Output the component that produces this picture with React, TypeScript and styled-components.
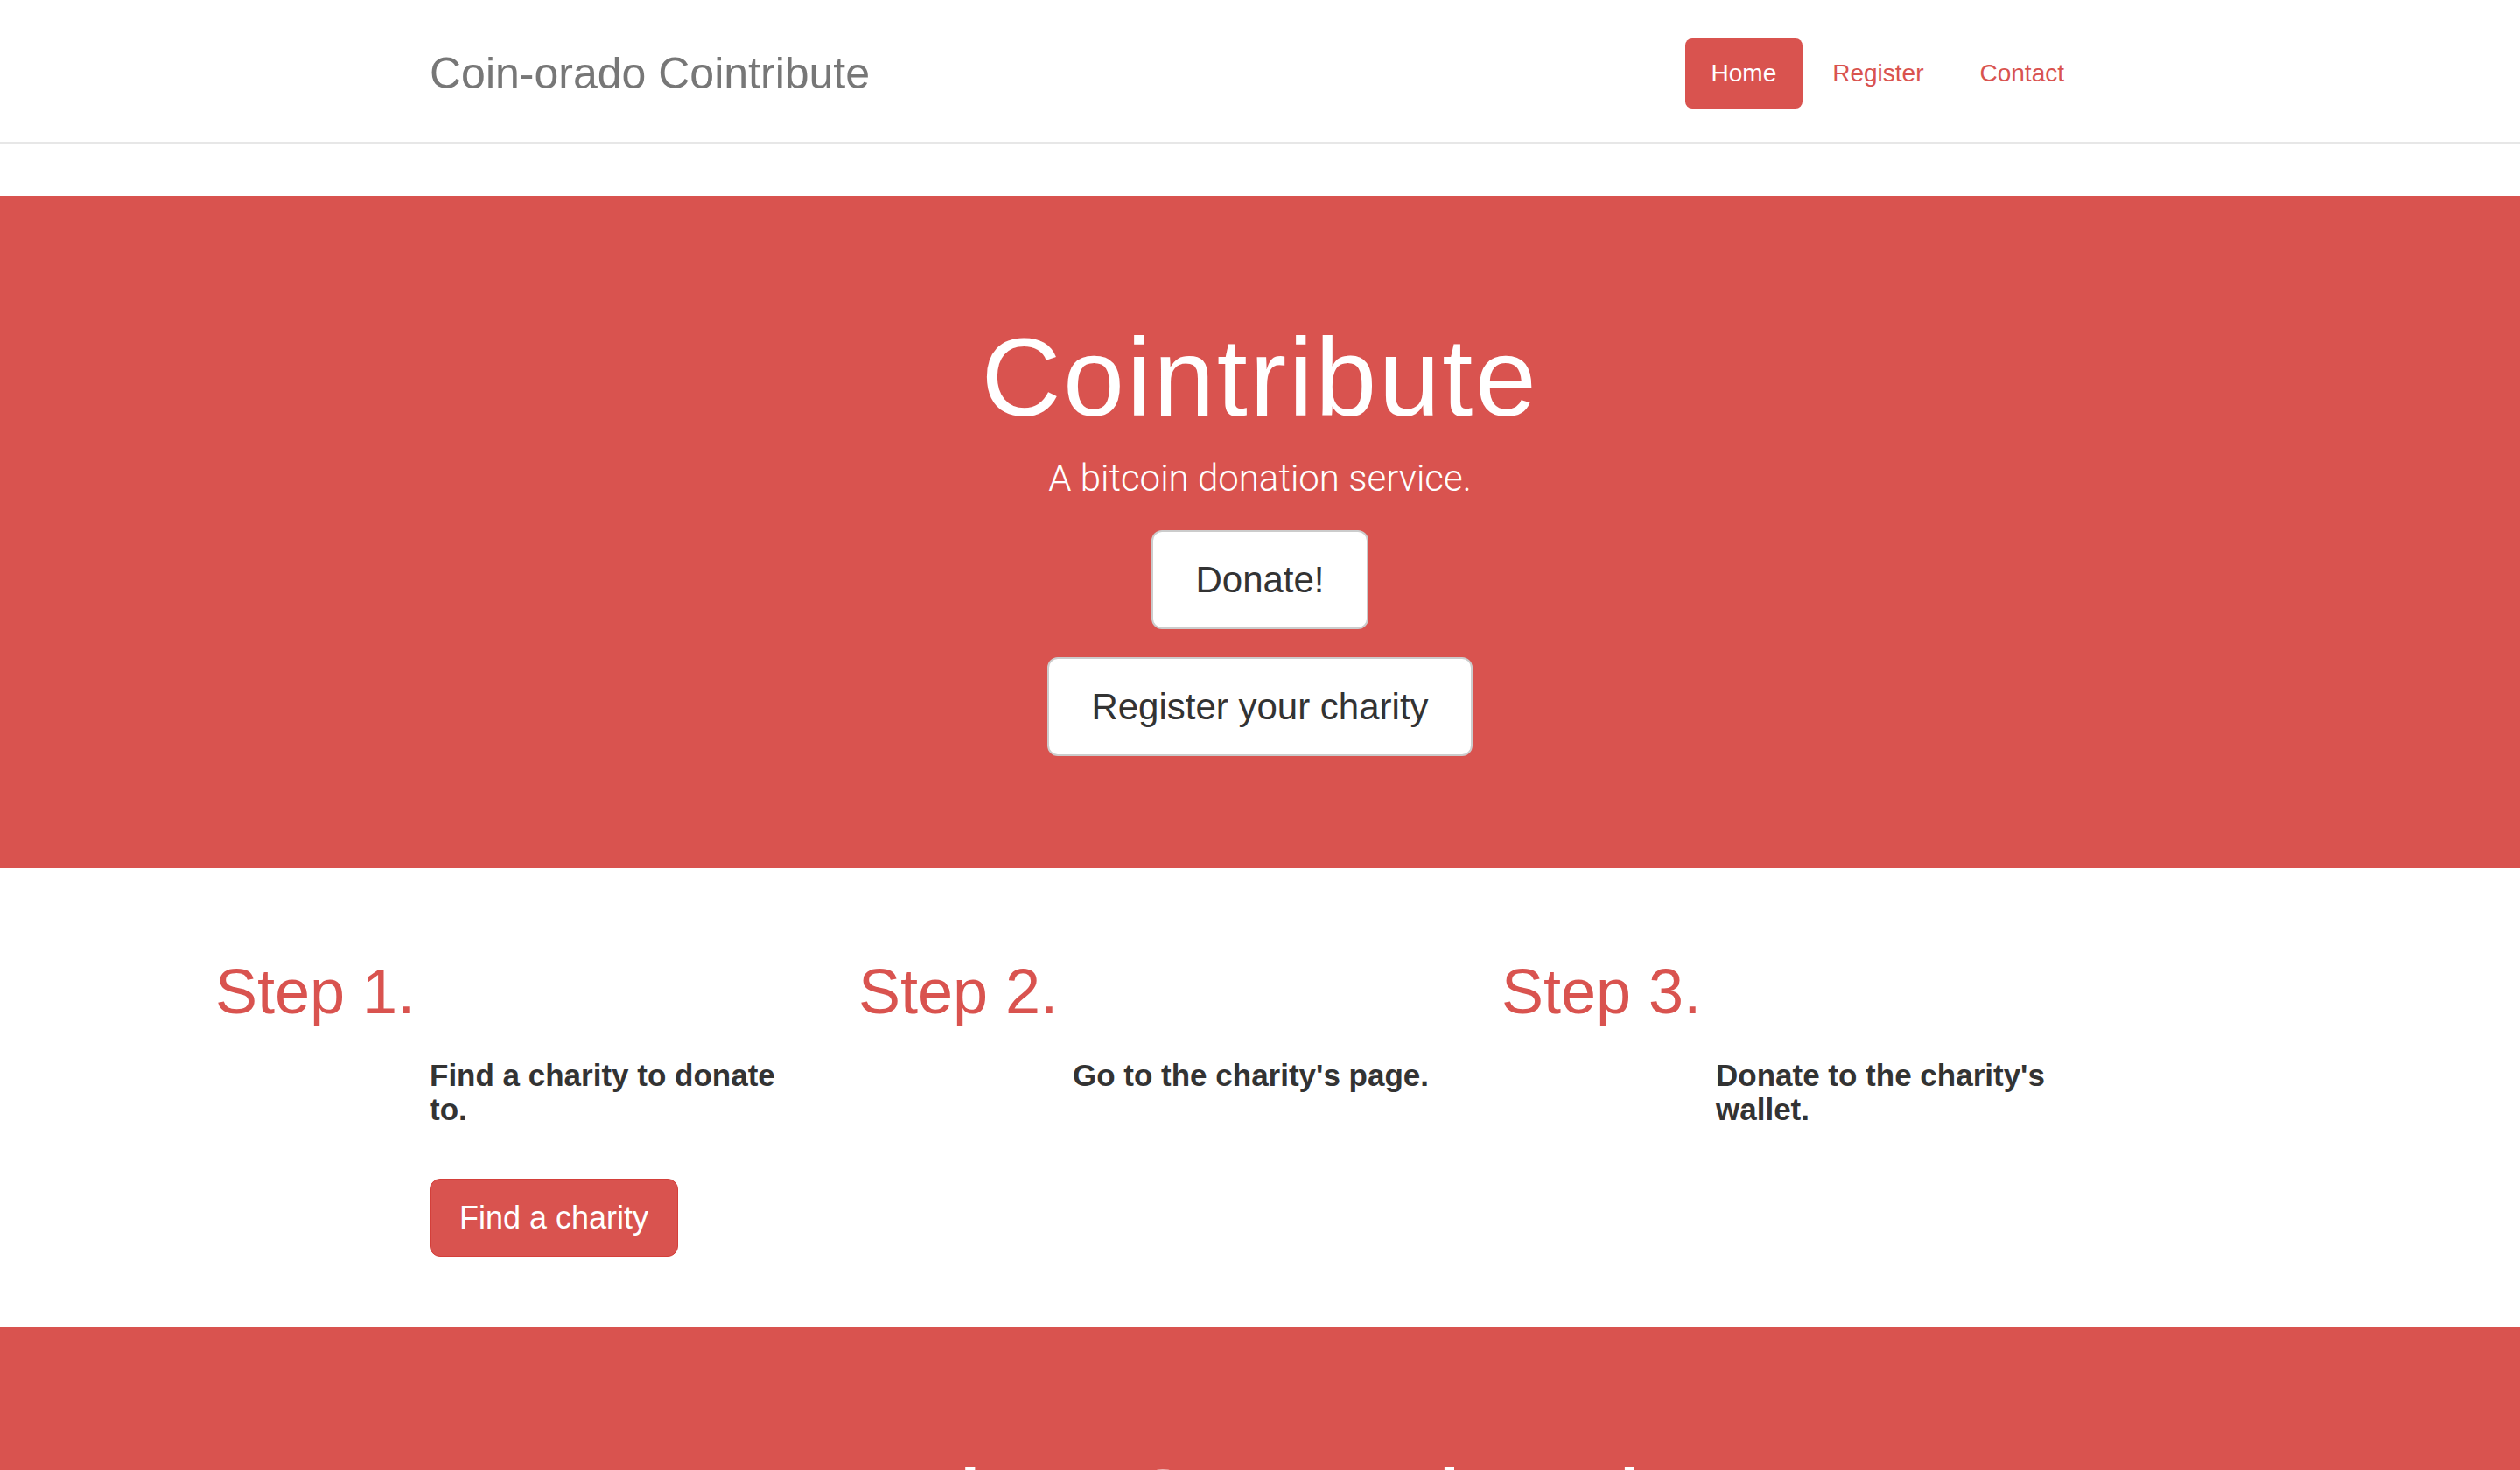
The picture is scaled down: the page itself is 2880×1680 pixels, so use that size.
import React from 'react'
import styled, { createGlobalStyle } from 'styled-components'

const red = '#d9534f'

const GlobalStyle = createGlobalStyle`
  html, body {
    margin: 0;
    padding: 0;
    background: #fff;
  }
  body {
    font-family: "Liberation Sans", Arial, sans-serif;
    font-size: 28px;
    line-height: 1.42857;
    color: #333;
  }
  * {
    box-sizing: border-box;
  }
`

const Navbar = styled.nav`
  background: #fff;
  border-bottom: 2px solid #e7e7e7;
  padding: 44px 0 38px;
  margin-bottom: 60px;
`

const NavInner = styled.div`
  width: 1898px;
  margin: 0 auto;
  display: flex;
  align-items: center;
  justify-content: space-between;
`

const Brand = styled.a`
  font-size: 50px;
  line-height: 80px;
  color: #777;
  text-decoration: none;
`

const Pills = styled.ul`
  display: flex;
  gap: 4px;
  list-style: none;
  margin: 0;
  padding: 0;
`

const Pill = styled.a<{ $active?: boolean }>`
  display: block;
  padding: 20px 30px;
  font-size: 28px;
  line-height: 40px;
  border-radius: 8px;
  text-decoration: none;
  color: ${p => (p.$active ? '#fff' : red)};
  background: ${p => (p.$active ? red : 'transparent')};
`

const Jumbotron = styled.section`
  background: ${red};
  color: #fff;
  text-align: center;
  padding: 139px 0 128px;
`

const Title = styled.h1`
  margin: 0;
  font-size: 126px;
  line-height: 1.1;
  font-weight: 400;
  letter-spacing: 2.5px;
`

const Lead = styled.p`
  margin: 15px 0 29px;
  font-family: Roboto, "Liberation Sans", sans-serif;
  font-weight: 300;
  font-size: 42px;
  line-height: 60px;
`

const HeroButtons = styled.div`
  display: flex;
  flex-direction: column;
  align-items: center;
  gap: 32px;
`

const HeroButton = styled.a`
  display: inline-block;
  background: #fff;
  color: #333;
  border: 2px solid #ccc;
  border-radius: 12px;
  font-size: 42px;
  line-height: 56px;
  padding: 27px 48px 26px;
  text-decoration: none;
`

const Steps = styled.section`
  padding: 102px 0 81px 216px;
  display: grid;
  grid-template-columns: repeat(3, 735px);
  align-items: start;
`

const Step = styled.div`
  padding: 0 30px;
`

const StepTitle = styled.h1`
  margin: 0;
  font-size: 72px;
  line-height: 1.1;
  font-weight: 400;
  color: ${red};
`

const StepBody = styled.div`
  margin: 36px 0 0 245px;
  width: 430px;
`

const StepText = styled.h4`
  margin: 0;
  font-size: 35px;
  line-height: 39px;
  font-weight: 700;
  color: #333;
`

const RedButton = styled.a`
  display: inline-block;
  margin-top: 60px;
  background: ${red};
  color: #fff;
  border: 1px solid #d43f3a;
  border-radius: 12px;
  font-size: 36px;
  line-height: 48px;
  padding: 20px 33px 19px;
  text-decoration: none;
`

const steps = [
  { title: 'Step 1.', text: 'Find a charity to donate to.', action: 'Find a charity' },
  { title: 'Step 2.', text: "Go to the charity's page." },
  { title: 'Step 3.', text: "Donate to the charity's wallet." },
]

export default function App() {
  return (
    <>
      <GlobalStyle />
      <Navbar>
        <NavInner>
          <Brand href="#">Coin-orado Cointribute</Brand>
          <Pills>
            <li><Pill href="#" $active>Home</Pill></li>
            <li><Pill href="#">Register</Pill></li>
            <li><Pill href="#">Contact</Pill></li>
          </Pills>
        </NavInner>
      </Navbar>

      <Jumbotron>
        <Title>Cointribute</Title>
        <Lead>A bitcoin donation service.</Lead>
        <HeroButtons>
          <HeroButton href="#">Donate!</HeroButton>
          <HeroButton href="#">Register your charity</HeroButton>
        </HeroButtons>
      </Jumbotron>

      <Steps>
        {steps.map(s => (
          <Step key={s.title}>
            <StepTitle>{s.title}</StepTitle>
            <StepBody>
              <StepText>{s.text}</StepText>
              {s.action && <RedButton href="#">{s.action}</RedButton>}
            </StepBody>
          </Step>
        ))}
      </Steps>

      <Jumbotron>
        <Title>Popular Organizations</Title>
      </Jumbotron>
    </>
  )
}
